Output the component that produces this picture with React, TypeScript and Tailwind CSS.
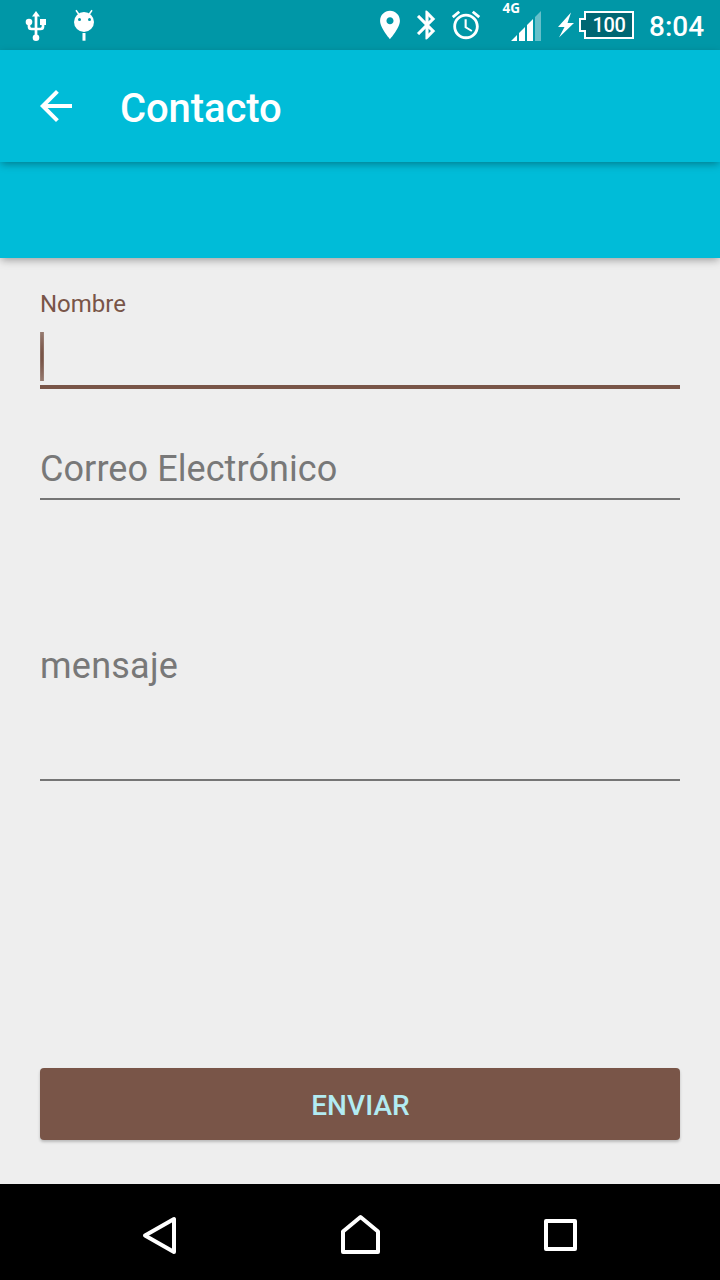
import type { ReactNode } from 'react';

function Icon({ box, className, children }: { box: string; className: string; children: ReactNode }) {
  return (
    <svg viewBox={box} className={`block shrink-0 fill-current ${className}`} aria-hidden="true">
      {children}
    </svg>
  );
}

function StatusBar() {
  return (
    <div className="flex h-[50px] shrink-0 bg-[#0097a7] pr-4 pl-6 text-white">
      <Icon box="24 0 24 50" className="h-[50px] w-6">
        <path d="M36 11l4 5.500h-8z" />
        <path d="M36 15v22M29 22v4.500q0 2.500 2.500 2.500h9q2.500 0 2.500-2.500v-4.500" fill="none" stroke="currentColor" strokeWidth="2.700" />
        <circle cx="29" cy="22" r="3.300" />
        <path d="M40 19h6v6h-6z" />
        <circle cx="36" cy="37.800" r="3.300" />
      </Icon>
      <Icon box="72 0 24 50" className="ml-6 h-[50px] w-6">
        <circle cx="84" cy="22" r="10" />
        <path d="M76 10.200l3 4.300M92 10.200l-3 4.300" stroke="currentColor" strokeWidth="1.500" />
        <circle cx="79.500" cy="19.500" r="1.500" fill="#0097a7" />
        <circle cx="89.500" cy="19.500" r="1.500" fill="#0097a7" />
        <path d="M82.500 33h3v7.700h-3z" />
      </Icon>
      <Icon box="0 0 24 24" className="mt-2 ml-auto size-[34px]">
        <path d="M12 2C8.130 2 5 5.130 5 9c0 5.250 7 13 7 13s7-7.750 7-13c0-3.870-3.130-7-7-7zm0 9.500c-1.380 0-2.500-1.120-2.500-2.500s1.120-2.500 2.500-2.500 2.500 1.120 2.500 2.500-1.120 2.500-2.500 2.500z" />
      </Icon>
      <Icon box="0 0 24 24" className="mt-2 ml-[3px] size-[34px]">
        <path stroke="currentColor" strokeWidth="0.2" d="M17.710 7.710L12 2h-1v7.590L6.410 5 5 6.410 10.590 12 5 17.590 6.410 19 11 14.410V22h1l5.710-5.710-4.300-4.290 4.300-4.290zM13 5.830l1.880 1.880L13 9.590V5.830zm1.880 10.460L13 18.170v-3.760l1.880 1.880z" />
      </Icon>
      <Icon box="0 0 24 24" className="mt-2 ml-[5px] size-[34px]">
        <path d="M22 5.720l-4.600-3.860-1.290 1.530 4.600 3.860L22 5.720zM7.880 3.390L6.600 1.860 2 5.710l1.290 1.530 4.590-3.850zM12.500 8H11v6l4.750 2.850.75-1.230-4-2.370V8zM12 4c-4.970 0-9 4.030-9 9s4.020 9 9 9c4.970 0 9-4.030 9-9s-4.030-9-9-9zm0 16c-3.870 0-7-3.130-7-7s3.130-7 7-7 7 3.130 7 7-3.130 7-7 7z" />
      </Icon>
      <div className="relative ml-5 h-[50px] w-[38px]">
        <span className="absolute top-0 left-[-0.5px] font-['Open_Sans',sans-serif] text-[13.5px] leading-[17px] font-bold">4G</span>
        <Icon box="503 0 38 50" className="h-[50px] w-[38px]">
          <path d="M511 41l6-6v6zM519 33l6-6v14h-6zM527 25l6-6v22h-6z" />
          <path d="M535 17l6-6v30h-6z" fillOpacity="0.4" />
        </Icon>
      </div>
      <Icon box="556 0 20 50" className="ml-[15px] h-[50px] w-5">
        <path d="M571 12.500L558 27h6.500l-5.500 10.500L574 23h-6.500z" />
      </Icon>
      <div className="relative ml-[3px] h-[50px] w-[55px]">
        <Icon box="579 0 55 50" className="h-[50px] w-[55px]">
          <path d="M585 12h48v26h-48v-7h-5v-12h5z" fill="#006773" stroke="currentColor" strokeWidth="2" />
        </Icon>
        <span className="absolute inset-y-0 left-[5px] w-[50px] text-center text-[20px] leading-[50px] font-medium tracking-[-0.3px]">100</span>
      </div>
      <span className="ml-[15px] w-[55px] text-[28px] leading-[54px] font-medium whitespace-nowrap">8:04</span>
    </div>
  );
}

function Toolbar() {
  return (
    <header className="relative z-20 flex h-28 shrink-0 items-center bg-[#00bcd8] pl-8 text-white shadow-[0_3px_8px_-1px_rgba(0,0,0,0.35)]">
      <Icon box="0 0 24 24" className="size-12">
        <path d="M20 11H7.830l5.590-5.590L12 4l-8 8 8 8 1.410-1.410L7.830 13H20v-2z" />
      </Icon>
      <h1 className="mt-1.5 ml-10 text-[40px] leading-[48px] font-medium tracking-[-0.1px]">Contacto</h1>
    </header>
  );
}

function ContactForm() {
  return (
    <main className="flex flex-1 flex-col px-10 pt-8 pb-11">
      <div className="h-[99px] border-b-4 border-[#795548]">
        <label className="block text-[24px] leading-[28px] text-[#795548]">Nombre</label>
        <div className="mt-[14px] h-[49px] w-1 bg-radial from-[#795548] from-20% to-[#a58f86]" />
      </div>
      <div className="mt-[59px] h-[52px] border-b-2 border-[#757575] text-[36px] leading-[42px] tracking-[0.08px] text-[#787878]">Correo Electrónico</div>
      <div className="mt-[145px] h-[136px] border-b-2 border-[#757575] text-[36px] leading-[42px] tracking-[0.24px] text-[#787878]">mensaje</div>
      <button className="mt-auto h-[72px] rounded-[4px] bg-[#795548] pt-1 pl-px text-[28px] font-medium tracking-[0.1px] text-[#b2ebf2] shadow-[0_2px_3px_rgba(0,0,0,0.22)]">ENVIAR</button>
    </main>
  );
}

function NavigationBar() {
  return (
    <nav className="flex h-24 shrink-0 items-center bg-black pl-[140px] text-white">
      <Icon box="140 1184 40 96" className="h-24 w-10">
        <path d="M145 1235.500L174 1219v33z" fill="none" stroke="currentColor" strokeWidth="4" strokeLinejoin="round" />
      </Icon>
      <Icon box="340 1184 40 96" className="ml-40 h-24 w-10">
        <path d="M343 1252v-20.500l17.500-14.500 17.500 14.500V1252z" fill="none" stroke="currentColor" strokeWidth="4" strokeLinejoin="round" />
      </Icon>
      <Icon box="540 1184 40 96" className="ml-40 h-24 w-10">
        <rect x="546" y="1221" width="29" height="28" fill="none" stroke="currentColor" strokeWidth="4" strokeLinejoin="round" />
      </Icon>
    </nav>
  );
}

export default function App() {
  return (
    <div className="flex h-[1280px] w-[720px] flex-col overflow-hidden bg-[#eeeeee] font-[Roboto,sans-serif]">
      <StatusBar />
      <Toolbar />
      <div className="relative z-10 h-24 shrink-0 bg-[#00bcd8] shadow-[0_3px_8px_-1px_rgba(0,0,0,0.35)]" />
      <ContactForm />
      <NavigationBar />
    </div>
  );
}
